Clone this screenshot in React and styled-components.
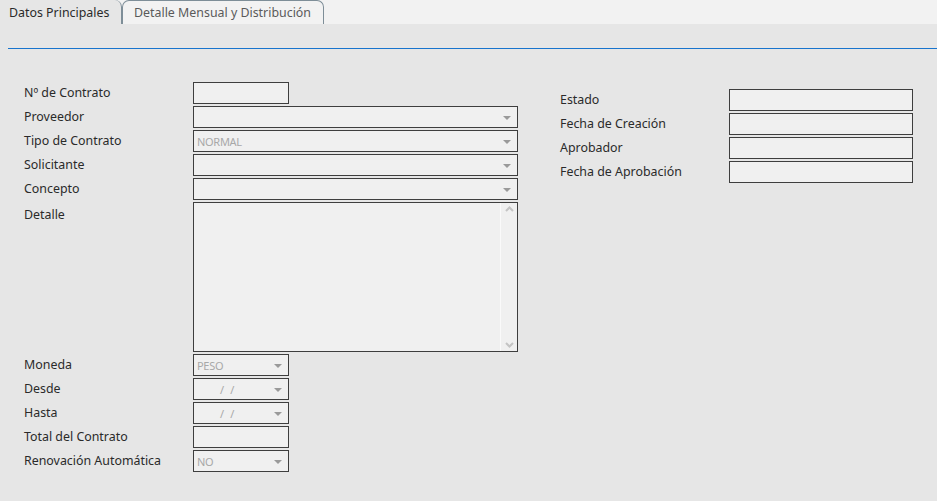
import React from "react";
import styled, { createGlobalStyle } from "styled-components";

const Global = createGlobalStyle`
  html, body { margin: 0; padding: 0; background: #e6e6e6; }
  body { font-family: "Noto Sans", "Open Sans", sans-serif; font-size: 12.4px; color: #333; }
  * { box-sizing: border-box; }
`;

const Page = styled.div`
  width: 937px;
  height: 501px;
  background: #e6e6e6;
  overflow: hidden;
`;

const TabStrip = styled.div`
  display: flex;
  height: 24px;
  background: #f2f2f2;
`;

const Tab = styled.div`
  height: 24px;
  display: flex;
  align-items: center;
  width: ${(p) => p.$w}px;
  padding-left: ${(p) => (p.$active ? "9px" : "11px")};
  font-size: 12.4px;
  color: ${(p) => (p.$active ? "#2a2a2a" : "#5a5a5a")};
  background: ${(p) => (p.$active ? "#e6e6e6" : "#f2f2f2")};
  border-right: 1px solid #7e8e98;
  border-top: ${(p) => (p.$active ? "none" : "1px solid #7e8e98")};
  border-left: ${(p) => (p.$active ? "none" : "1px solid #7e8e98")};
  border-radius: ${(p) => (p.$active ? "0 7px 0 0" : "7px 7px 0 0")};
  white-space: nowrap;
`;

const Divider = styled.div`
  margin: 24px 0 0 8px;
  border-top: 1px solid #1874cd;
`;

const Form = styled.div`
  display: flex;
  padding: 33px 0 0 24px;
  gap: 42px;
`;

const Column = styled.div`
  display: grid;
  grid-template-columns: 169px ${(p) => p.$w}px;
  row-gap: 2px;
  align-content: start;
  margin-top: ${(p) => p.$offset || 0}px;
`;

const Label = styled.div`
  height: 22px;
  line-height: 21px;
  white-space: nowrap;
  color: #2a2a2a;
  align-self: ${(p) => (p.$top ? "start" : "center")};
  margin-top: ${(p) => (p.$top ? "2px" : "0")};
`;

const Box = styled.div`
  position: relative;
  width: ${(p) => (p.$w ? p.$w + "px" : "100%")};
  height: ${(p) => p.$h || 22}px;
  border: 1px solid #3e3e3e;
  background: #f0f0f0;
  display: flex;
  align-items: center;
  padding-left: 3px;
  font-size: 11px;
  color: #a8a8a8;
  letter-spacing: -0.3px;
`;

const Arrow = styled.span`
  position: absolute;
  right: 6px;
  top: 9px;
  width: 0;
  height: 0;
  border-left: 4px solid transparent;
  border-right: 4px solid transparent;
  border-top: 4px solid #9a9a9a;
`;

const DateText = styled.span`
  padding-left: 23px;
  word-spacing: 4px;
`;

const Scroll = styled.div`
  position: absolute;
  right: 0;
  top: 0;
  bottom: 0;
  width: 17px;
  border-left: 1px solid #fafafa;
  display: flex;
  flex-direction: column;
  justify-content: space-between;
  align-items: center;
  padding: 3px 0 3px;
`;

const Chevron = ({ up }) => (
  <svg width="9" height="6" viewBox="0 0 9 6">
    <path
      d={up ? "M1 5 L4.5 1.5 L8 5" : "M1 1 L4.5 4.5 L8 1"}
      fill="none"
      stroke="#c4c4c4"
      strokeWidth="2"
    />
  </svg>
);

const Select = ({ w, value, date }) => (
  <Box $w={w}>
    {date ? <DateText>/ /</DateText> : value}
    <Arrow />
  </Box>
);

export default function App() {
  return (
    <Page>
      <Global />
      <TabStrip>
        <Tab $active $w={122}>Datos Principales</Tab>
        <Tab $w={202}>Detalle Mensual y Distribución</Tab>
      </TabStrip>
      <Divider />
      <Form>
        <Column $w={325}>
          <Label>Nº de Contrato</Label>
          <Box $w={96} />
          <Label>Proveedor</Label>
          <Select />
          <Label>Tipo de Contrato</Label>
          <Select value="NORMAL" />
          <Label>Solicitante</Label>
          <Select />
          <Label>Concepto</Label>
          <Select />
          <Label $top>Detalle</Label>
          <Box $h={150}>
            <Scroll>
              <Chevron up />
              <Chevron />
            </Scroll>
          </Box>
          <Label>Moneda</Label>
          <Select w={96} value="PESO" />
          <Label>Desde</Label>
          <Select w={96} date />
          <Label>Hasta</Label>
          <Select w={96} date />
          <Label>Total del Contrato</Label>
          <Box $w={96} />
          <Label>Renovación Automática</Label>
          <Select w={96} value="NO" />
        </Column>
        <Column $w={184} $offset={7}>
          <Label>Estado</Label>
          <Box />
          <Label>Fecha de Creación</Label>
          <Box />
          <Label>Aprobador</Label>
          <Box />
          <Label>Fecha de Aprobación</Label>
          <Box />
        </Column>
      </Form>
    </Page>
  );
}
